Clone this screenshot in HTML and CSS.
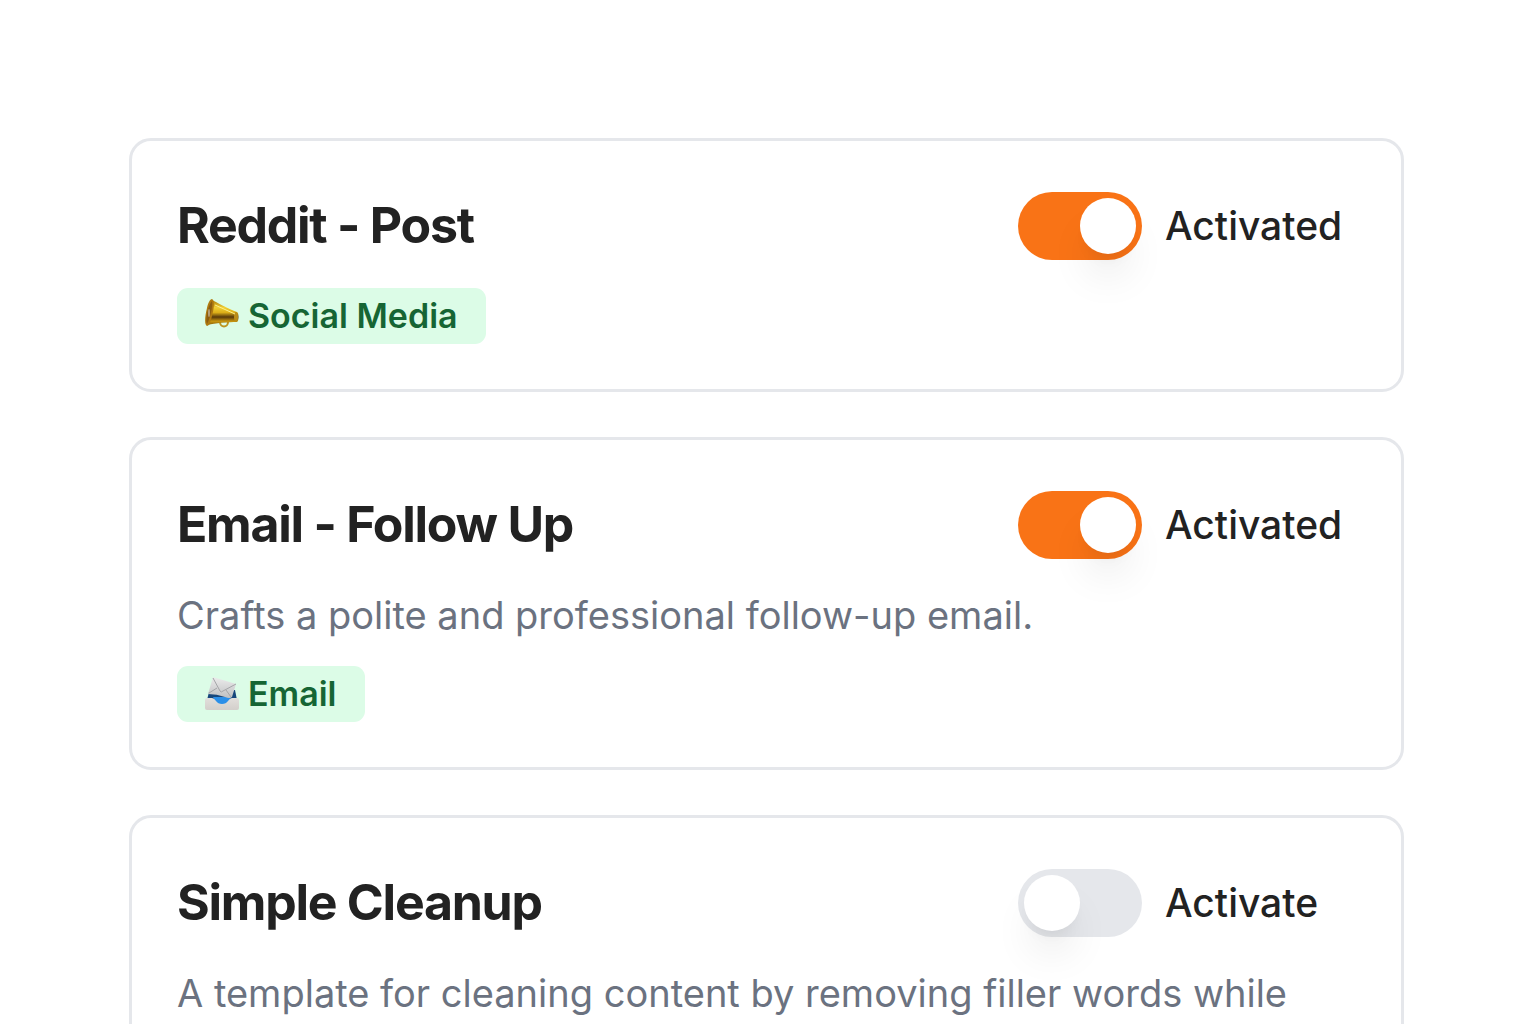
FILE: index.html
```
<!DOCTYPE html>
<html lang="en">
<head>
  <meta charset="UTF-8">
  <meta name="viewport" content="width=device-width, initial-scale=1.0">
  <title>Templates</title>
  <link rel="stylesheet" href="styles.css">
</head>
<body>

<main class="templates">
  <article class="card">
    <div class="card-header">
      <h2 class="card-title">Reddit - Post</h2>
      <label class="toggle">
        <input type="checkbox" class="switch" role="switch" checked>
        <span class="toggle-label">Activated</span>
      </label>
    </div>
    <div class="badge">
      <svg class="badge-icon" viewBox="0 0 34 34" aria-hidden="true">
        <defs>
          <linearGradient id="gold" x1="0" y1="0" x2="0" y2="1">
            <stop offset="0" stop-color="#a87808"/>
            <stop offset="0.3" stop-color="#f0cf35"/>
            <stop offset="0.5" stop-color="#dcae18"/>
            <stop offset="0.68" stop-color="#57380a"/>
            <stop offset="0.85" stop-color="#c8960f"/>
            <stop offset="1" stop-color="#8a5e0a"/>
          </linearGradient>
        </defs>
        <path d="M15 23c0 6 8 6 8 0" fill="none" stroke="#bd9420" stroke-width="2"/>
        <path d="M7 1C11 3 24 10 32 13C34 14 34 22 32 23C24 23 9 24 3 26Z" fill="url(#gold)"/>
        <ellipse cx="31" cy="18" rx="2" ry="5" fill="#b98c18"/>
        <path d="M7 0C10 1 9 10 7 17C6 22 4 27 2 27C-1 26 0 17 2 9C3 4 5 0 7 0Z" fill="#b07a10"/>
        <path d="M7 2C8 7 5 20 2 25C0 21 3 6 7 2Z" fill="#8b5d12"/>
        <ellipse cx="4" cy="14" rx="1" ry="4" fill="#b9a07a"/>
        <path d="M10 6l20 9" stroke="#fff08a" stroke-width="1"/>
      </svg>
      Social Media
    </div>
  </article>

  <article class="card">
    <div class="card-header">
      <h2 class="card-title">Email - Follow Up</h2>
      <label class="toggle">
        <input type="checkbox" class="switch" role="switch" checked>
        <span class="toggle-label">Activated</span>
      </label>
    </div>
    <p class="card-text">Crafts a polite and professional follow-up email.</p>
    <div class="badge">
      <svg class="badge-icon" viewBox="0 0 34 34" aria-hidden="true">
        <defs>
          <linearGradient id="paper" x1="0" y1="0" x2="0" y2="1">
            <stop offset="0" stop-color="#ececec"/>
            <stop offset="1" stop-color="#bfc0c2"/>
          </linearGradient>
          <linearGradient id="tray" x1="0" y1="0" x2="0" y2="1">
            <stop offset="0" stop-color="#e2dfdc"/>
            <stop offset="1" stop-color="#d3cfcb"/>
          </linearGradient>
        </defs>
        <path d="M4 15L30 13L32 23L24 27H10L2 23Z" fill="#17477c"/>
        <path d="M8 20H26L22 28H12Z" fill="#2b8fe8"/>
        <path d="M8 0L31 7L27 20Q25 22 20 20Q12 17 3 17Z" fill="url(#paper)"/>
        <path d="M8 1L15 14Q16 16 18 14L31 7M4 16L12 11M26 20L21 13" fill="none" stroke="#a4a5a8" stroke-width="1"/>
        <path d="M0 23Q0 21 2 21H7Q9 21 11 24Q13 27 17 27Q21 27 23 24Q25 21 27 21H32Q34 21 34 23V31Q34 33 32 33H2Q0 33 0 31Z" fill="url(#tray)"/>
      </svg>
      Email
    </div>
  </article>

  <article class="card">
    <div class="card-header">
      <h2 class="card-title">Simple Cleanup</h2>
      <label class="toggle">
        <input type="checkbox" class="switch" role="switch">
        <span class="toggle-label">Activate</span>
      </label>
    </div>
    <p class="card-text">A template for cleaning content by removing filler words while</p>
  </article>
</main>

</body>
</html>
```
FILE: styles.css
```
* {
  box-sizing: border-box;
}

body {
  margin: 0;
  background-color: #fff;
  color: #222;
  font-family: Inter, "Liberation Sans", sans-serif;
}

.templates {
  display: flex;
  flex-direction: column;
  gap: 45px;
  padding: 138px 132px 45px 129px;
}

.card {
  display: flex;
  flex-direction: column;
  align-items: flex-start;
  gap: 23px;
  padding: 45px;
  border: 3px solid #e5e7eb;
  border-radius: 22px;
}

.card-header {
  display: flex;
  align-items: center;
  justify-content: space-between;
  width: 100%;
}

.card-title {
  margin: 0;
  font-size: 50px;
  font-weight: 700;
  line-height: 79px;
  letter-spacing: -0.025em; /* tight heading tracking */
}

.card-text {
  margin: 0;
  color: #6b7280;
  font-size: 38px;
  line-height: 56px;
}

.toggle {
  display: flex;
  align-items: center;
  gap: 23px;
  cursor: pointer;
}

.toggle-label {
  width: 191px;
  font-size: 39px;
  font-weight: 500;
  line-height: 56px;
}

.switch {
  appearance: none;
  display: flex;
  width: 124px;
  height: 68px;
  margin: 0;
  padding: 6px;
  border-radius: 34px;
  background-color: #e5e7eb;
  cursor: pointer;
}

.switch::before {
  content: "";
  width: 56px;
  height: 56px;
  border-radius: 50%;
  background-color: #fff;
  box-shadow: 0 28px 42px -8px rgba(0, 0, 0, 0.1), 0 11px 17px -11px rgba(0, 0, 0, 0.1);
}

.switch:checked {
  justify-content: flex-end;
  background-color: #f97316; /* orange when on */
}

.badge {
  display: flex;
  align-items: center;
  gap: 9px;
  padding: 0 28px;
  border-radius: 11px;
  background-color: #dcfce7;
  color: #166534;
  font-size: 34px;
  font-weight: 600;
  line-height: 56px;
}

.badge-icon {
  width: 34px;
  height: 34px;
}
```
